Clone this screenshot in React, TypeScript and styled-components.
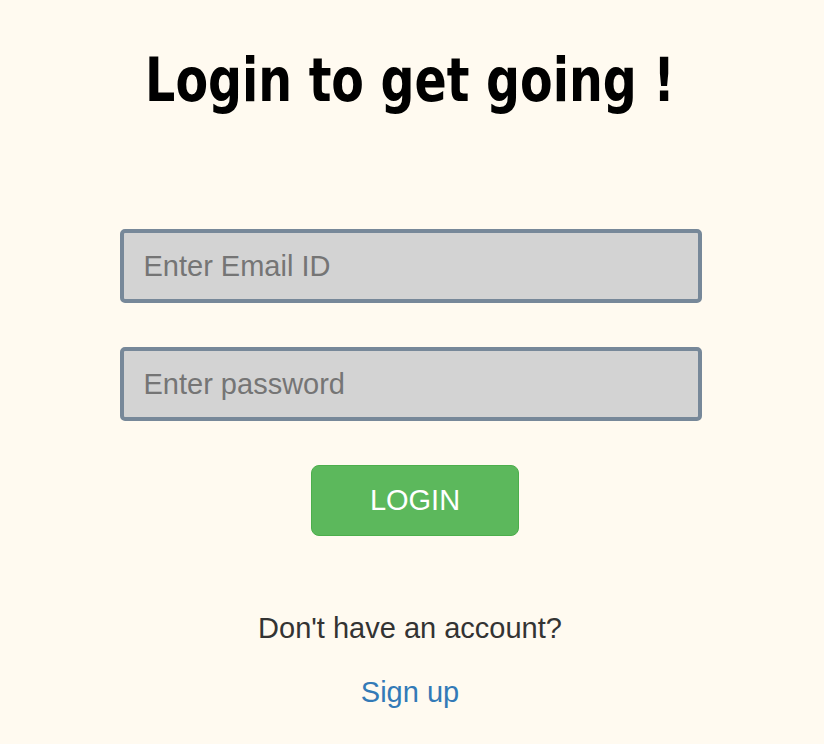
import React from "react";
import styled, { createGlobalStyle } from "styled-components";

const Global = createGlobalStyle`
  html, body { margin: 0; padding: 0; background: #fffaf0; }
  body { font-family: "Liberation Sans", Arial, sans-serif; }
  * { box-sizing: border-box; }
`;

const Page = styled.div`
  min-height: 744px;
  display: flex;
  flex-direction: column;
  align-items: center;
  padding-top: 44px;
`;

const Title = styled.h1`
  margin: 0;
  font-family: "DejaVu Sans Condensed", "DejaVu Sans", sans-serif;
  font-stretch: condensed;
  font-weight: 700;
  font-size: 60px;
  line-height: 72px;
  color: #000;
  margin-left: -4px;
  transform: scaleX(0.88);
  white-space: nowrap;
`;

const Form = styled.form`
  margin-top: 113px;
  display: flex;
  flex-direction: column;
  align-items: center;
  gap: 44px;
  width: 582px;
  margin-left: -3px;
`;

const Input = styled.input`
  width: 582px;
  height: 74px;
  border: 4px solid #778899;
  border-radius: 5px;
  background: #d3d3d3;
  padding: 0 20px;
  font-family: "Liberation Sans", Arial, sans-serif;
  font-size: 29px;
  color: #333;
  outline: none;
  &::placeholder { color: #757575; }
`;

const Button = styled.button`
  width: 208px;
  height: 71px;
  margin-left: 9px;
  background: #5cb85c;
  border: 1px solid #4cae4c;
  border-radius: 8px;
  color: #fff;
  font-family: "Liberation Sans", Arial, sans-serif;
  font-size: 29px;
  cursor: pointer;
`;

const Footer = styled.div`
  margin-top: 75px;
  display: flex;
  flex-direction: column;
  align-items: center;
  gap: 30px;
  margin-left: -4px;
`;

const Note = styled.p`
  margin: 0;
  font-size: 29px;
  line-height: 34px;
  color: #333;
`;

const Link = styled.a`
  font-size: 29px;
  line-height: 34px;
  color: #337ab7;
  text-decoration: none;
`;

export default function App() {
  return (
    <>
      <Global />
      <Page>
        <Title>Login to get going !</Title>
        <Form onSubmit={(e) => e.preventDefault()}>
          <Input type="email" placeholder="Enter Email ID" />
          <Input type="password" placeholder="Enter password" />
          <Button type="submit">LOGIN</Button>
        </Form>
        <Footer>
          <Note>Don't have an account?</Note>
          <Link href="#">Sign up</Link>
        </Footer>
      </Page>
    </>
  );
}
